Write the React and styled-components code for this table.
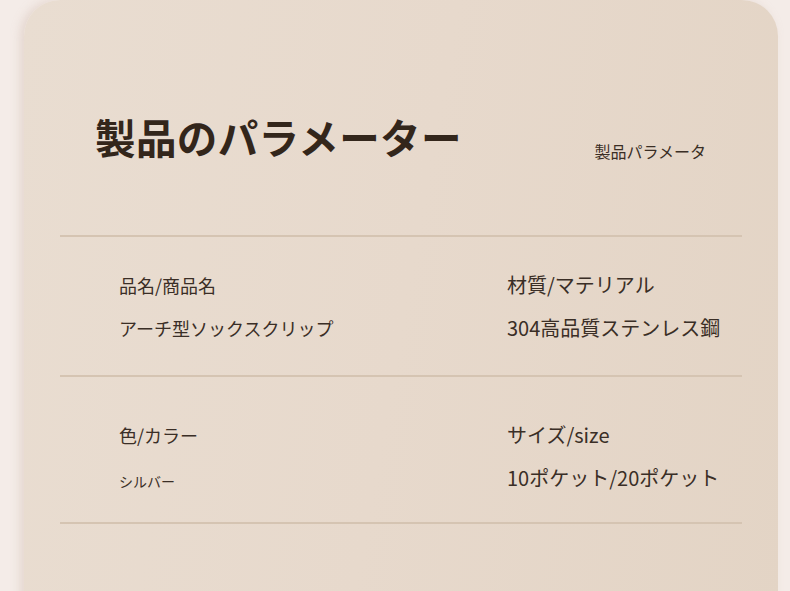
import React from 'react';
import styled, {createGlobalStyle} from "styled-components";

const GlobalStyle = createGlobalStyle`
    html, body {
        margin: 0;
        padding: 0;
        background: #f4ece8;
        overflow: hidden;
    }
    body {
        font-family: "Noto Sans CJK JP", "Noto Sans", sans-serif;
    }
`;

const params = [
    {
        top: 35,
        bottom: 34,
        left: {label: "品名/商品名", value: "アーチ型ソックスクリップ"},
        right: {label: "材質/マテリアル", value: "304高品質ステンレス鋼"},
    },
    {
        top: 45,
        bottom: 28,
        left: {label: "色/カラー", value: "シルバー", small: true},
        right: {label: "サイズ/size", value: "10ポケット/20ポケット"},
    },
];

const Page = styled.div`
    width: 790px;
    height: 591px;
    overflow: hidden;
    display: flex;
    padding-left: 24px;
    box-sizing: border-box;
`;

const Card = styled.div`
    width: 754px;
    height: 640px;
    border-radius: 36px 36px 0 0;
    background: linear-gradient(100deg, #e9ddd1 0%, #e7d9cc 50%, #e3d4c5 100%);
    box-shadow: -4px 0 10px rgba(200, 175, 160, 0.35);
    padding: 0 36px;
    box-sizing: border-box;
`;

const Header = styled.div`
    display: flex;
    align-items: flex-end;
    justify-content: space-between;
    padding: 113px 36px 74px 35px;
    border-bottom: 2px solid #d5c4b2;
`;

const Title = styled.h1`
    margin: 0;
    font-size: 40.5px;
    line-height: 48px;
    font-weight: 700;
    color: #33261b;
    letter-spacing: 0.4px;
`;

const SubTitle = styled.div`
    font-size: 16px;
    line-height: 20px;
    color: #3a2e25;
`;

const Row = styled.div`
    display: grid;
    grid-template-columns: 388px 1fr;
    padding: ${({$top}) => $top}px 0 ${({$bottom}) => $bottom}px 59px;
    border-bottom: 2px solid #d5c4b2;
`;

const Cell = styled.div`
    display: flex;
    flex-direction: column;
    gap: 17px;
`;

const Label = styled.div`
    font-size: ${({$big}) => ($big ? 20 : 18)}px;
    line-height: 26px;
    color: #3a2e26;
`;

const Value = styled.div`
    font-size: ${({$size}) => $size}px;
    line-height: 26px;
    color: #3a2e26;
    ${({$small}) => $small && "padding-top: 3px;"}
`;

const App = () => {
    return <>
        <GlobalStyle />
        <Page>
            <Card>
                <Header>
                    <Title>製品のパラメーター</Title>
                    <SubTitle>製品パラメータ</SubTitle>
                </Header>
                {params.map((p, i) => (
                    <Row key={i} $top={p.top} $bottom={p.bottom}>
                        <Cell>
                            <Label>{p.left.label}</Label>
                            <Value $size={p.left.small ? 14 : 18} $small={p.left.small}>{p.left.value}</Value>
                        </Cell>
                        <Cell>
                            <Label $big>{p.right.label}</Label>
                            <Value $size={20}>{p.right.value}</Value>
                        </Cell>
                    </Row>
                ))}
            </Card>
        </Page>
    </>;
}

export default App;
